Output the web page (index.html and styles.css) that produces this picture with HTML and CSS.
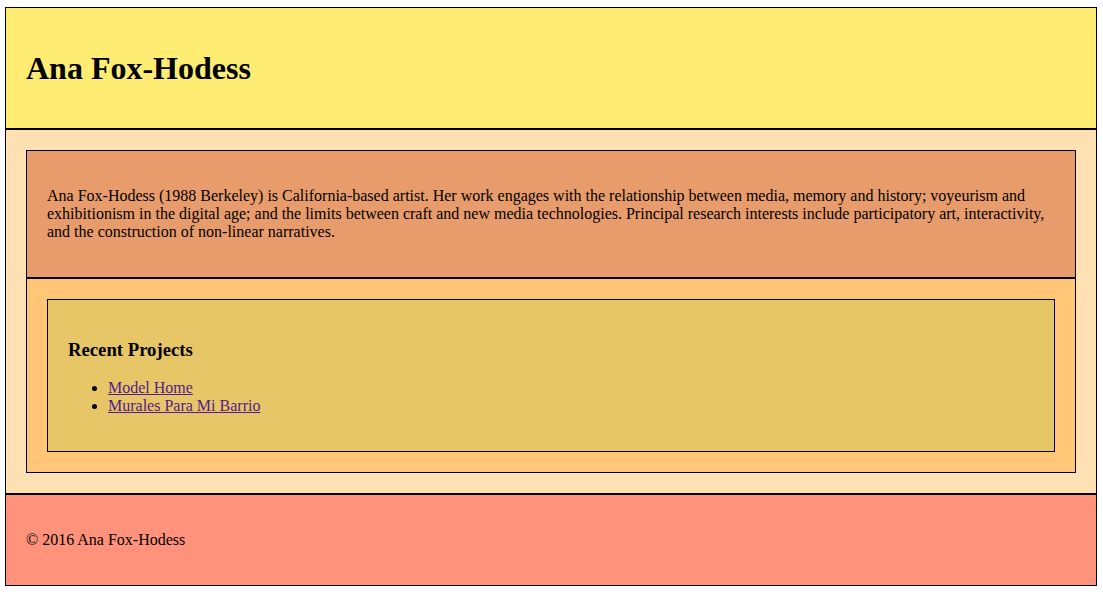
FILE: index.html
```html
<!DOCTYPE html>
<html lang="en">
<head>
<meta charset="utf-8">
<title>Ana Fox-Hodess</title>
<link rel="stylesheet" href="styles.css">
</head>
<body>
<header class="site-header">
  <h1 class="site-title">Ana Fox-Hodess</h1>
</header>
<main class="site-main">
  <section class="about">
    <p>Ana Fox-Hodess (1988 Berkeley) is California-based artist. Her work engages with the relationship between media, memory and history; voyeurism and exhibitionism in the digital age; and the limits between craft and new media technologies. Principal research interests include participatory art, interactivity, and the construction of non-linear narratives.</p>
  </section>
  <section class="projects">
    <div class="projects-inner">
      <h3 class="projects-title">Recent Projects</h3>
      <ul class="project-list">
        <li><a class="project-link" href="#model-home">Model Home</a></li>
        <li><a class="project-link" href="#murales">Murales Para Mi Barrio</a></li>
      </ul>
    </div>
  </section>
</main>
<footer class="site-footer">
  <p>© 2016 Ana Fox-Hodess</p>
</footer>
</body>
</html>
```

FILE: styles.css
```css
html {
  background: #ffffff;
}
body {
  margin: 7px 6px 5px 5px;
  font-family: "Liberation Serif", "Times New Roman", serif;
  font-size: 16px;
  color: #000;
}
.site-header,
.site-main,
.site-footer,
.about,
.projects,
.projects-inner {
  border: 1px solid #000;
  padding: 20px;
}
.site-header {
  background: #ffec73;
}
.site-title {
  font-size: 32px;
  line-height: 38px;
  margin: 21px 0;
}
.site-main {
  background: #ffe1b4;
}
.about {
  background: #e89c6b;
}
.projects {
  background: #ffc677;
}
.projects-inner {
  background: #e7c667;
}
.projects-title {
  font-size: 18.72px;
  margin: 18.72px 0;
}
.project-list {
  margin: 16px 0;
  padding-left: 40px;
}
.project-link {
  color: #551a8b;
}
.site-footer {
  background: #ff927b;
}
```
